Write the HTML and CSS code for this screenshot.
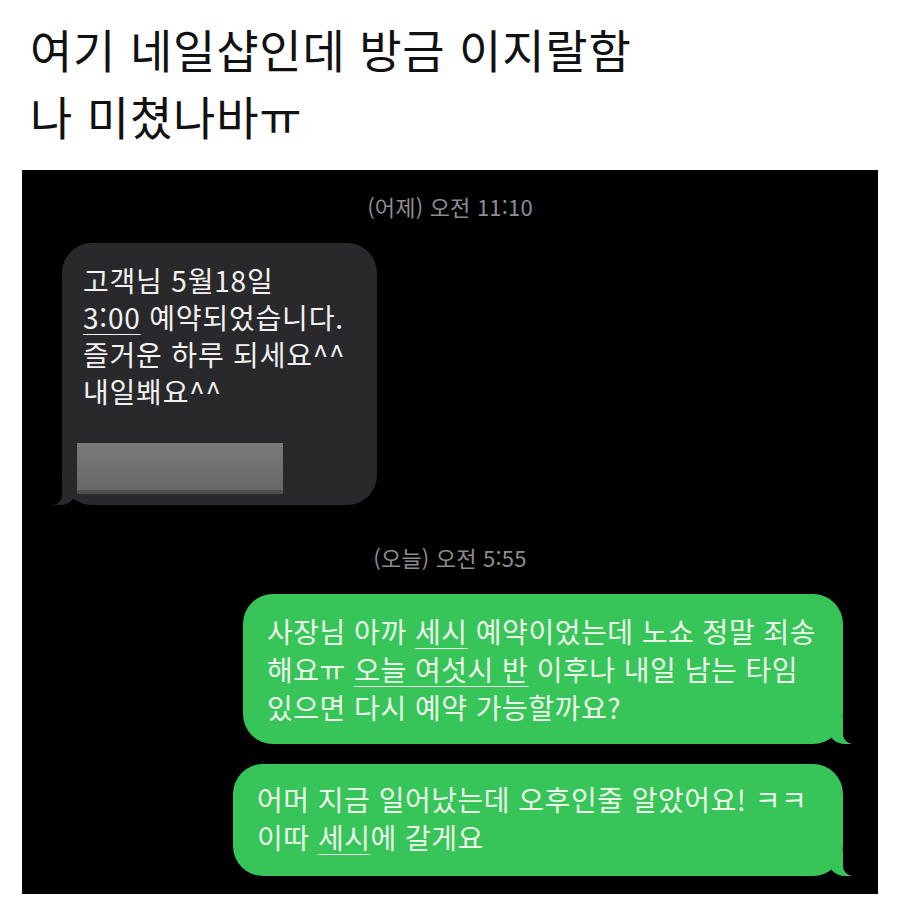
FILE: index.html
```html
<!doctype html>
<html lang="ko">
<head>
    <meta charset="UTF-8">
    <title>네일샵</title>
    <link rel="stylesheet" href="styles.css">
</head>
<body>
    <div class="post-title">
        <p>여기 네일샵인데 방금 이지랄함</p>
        <p>나 미쳤나바ㅠ</p>
    </div>
    <div class="chat">
        <div class="stamp">(어제) 오전 11:10</div>
        <div class="bubble received">
            <div class="msg">
                고객님 5월18일<br>
                <u>3:00</u> 예약되었습니다.<br>
                즐거운 하루 되세요^^<br>
                내일봬요^^
            </div>
            <div class="redacted"></div>
        </div>

        <div class="stamp stamp-today">(오늘) 오전 5:55</div>
        <div class="bubble sent first">
            <div class="msg">
                사장님 아까 <u>세시</u> 예약이었는데 노쇼 정말 죄송<br>
                해요ㅠ <u>오늘 여섯시 반</u> 이후나 내일 남는 타임<br>
                있으면 다시 예약 가능할까요?
            </div>
        </div>
        <div class="bubble sent second">
            <div class="msg">
                어머 지금 일어났는데 오후인줄 알았어요! ㅋㅋ<br>
                이따 <u>세시</u>에 갈게요
            </div>
        </div>
    </div>
</body>
</html>
```

FILE: styles.css
```css
body {
    margin: 0;
    background-color: #fff;
    font-family: "Noto Sans CJK KR", "Liberation Sans", sans-serif;
}

.post-title {
    padding: 15px 0 0 30px;
    color: #111;
}

.post-title p {
    margin: 0;
    font-size: 46px;
    line-height: 67px;
    letter-spacing: 0.8px;
}

.chat {
    display: flex;
    flex-direction: column;
    margin: 21px 0 0 22px;
    width: 856px;
    padding: 24px 0 18px;
    background-color: #000;
}

.stamp {
    text-align: center;
    color: #8d8d91;
    font-size: 22px;
    line-height: 24px;
    letter-spacing: 0.2px;
    margin-bottom: 25px;
}

.stamp-today {
    margin-top: 40px;
}

.bubble {
    position: relative;
    border-radius: 30px;
    font-size: 28px;
}

.bubble u {
    text-decoration-thickness: 1px;
    text-underline-offset: 5px;
}

.received {
    align-self: flex-start;
    margin-left: 40px;
    width: 315px;
    box-sizing: border-box;
    padding: 19px 16px 11px 21px;
    background-color: #29292b;
    color: #f2f2f2;
}

.received .msg {
    line-height: 37px;
    letter-spacing: 0.8px;
}

.redacted {
    width: 206px;
    height: 51px;
    margin: 33px 0 0 -6px;
    background: linear-gradient(#7a7a7a, #676767);
    border-bottom: 4px solid #4e4e4e;
    box-sizing: border-box;
}

.received::before {
    content: "";
    position: absolute;
    left: -8px;
    bottom: 0;
    width: 22px;
    height: 26px;
    background-color: #29292b;
    border-bottom-right-radius: 16px 14px;
}

.received::after {
    content: "";
    position: absolute;
    left: -26px;
    bottom: 0;
    width: 26px;
    height: 26px;
    background-color: #000;
    border-bottom-right-radius: 10px;
}

.sent {
    align-self: flex-end;
    margin-right: 35px;
    box-sizing: border-box;
    padding-left: 24px;
    background-color: #37c55a;
    color: #eef8ea;
}

.sent .msg {
    line-height: 38px;
    letter-spacing: 0.5px;
}

.sent.first {
    width: 600px;
    padding-top: 18px;
    padding-bottom: 18px;
}

.sent.second {
    width: 610px;
    margin-top: 20px;
    padding-top: 16px;
    padding-bottom: 20px;
}

.sent::before {
    content: "";
    position: absolute;
    right: -8px;
    bottom: 0;
    width: 22px;
    height: 26px;
    background-color: #37c55a;
    border-bottom-left-radius: 16px 14px;
}

.sent::after {
    content: "";
    position: absolute;
    right: -26px;
    bottom: 0;
    width: 26px;
    height: 26px;
    background-color: #000;
    border-bottom-left-radius: 10px;
}
```
